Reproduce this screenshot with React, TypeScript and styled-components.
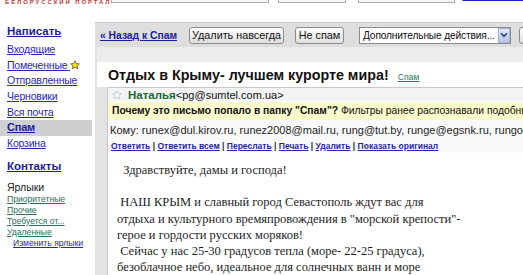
import styled, { createGlobalStyle } from 'styled-components'

const GlobalStyle = createGlobalStyle`
  body {
    margin: 0;
    background: #ffffff;
    font-family: "Liberation Sans", Arial, sans-serif;
  }
`

const Page = styled.div`
  width: 523px;
  height: 275px;
  overflow: hidden;
  background: #ffffff;
`

const TopStrip = styled.div`
  height: 6px;
  display: flex;
  align-items: flex-start;
  overflow: hidden;
  white-space: nowrap;
`

const Logo = styled.div`
  width: 112px;
  padding-left: 5px;
  margin-top: -1px;
  font-size: 6px;
  line-height: 6px;
  font-weight: bold;
  letter-spacing: 1.9px;
  color: #c43a3a;
`

const TopBox = styled.div<{ $w: number; $gap: number }>`
  width: ${(p) => p.$w}px;
  margin-left: ${(p) => p.$gap}px;
  height: 20px;
  margin-top: -19px;
  border: 1px solid #a9a9a9;
  background: #f6f6f6;
  flex-shrink: 0;
`

const TopLink = styled.a`
  margin-left: 7px;
  margin-top: -10px;
  font-size: 11px;
  line-height: 11px;
  color: #2323c0;
  text-decoration: underline;
`

const Layout = styled.div`
  display: flex;
  align-items: flex-start;
`

const Sidebar = styled.nav`
  width: 92px;
  flex-shrink: 0;
  padding-top: 17px;
`

const Compose = styled.a`
  display: block;
  padding-left: 7px;
  height: 16px;
  line-height: 16px;
  margin-bottom: 3px;
  font-size: 11.5px;
  font-weight: bold;
  color: #1c1c9c;
  text-decoration: underline;
`

const NavItem = styled.a<{ $active?: boolean }>`
  display: block;
  padding-left: 7px;
  height: 15.7px;
  line-height: 15.7px;
  font-size: ${(p) => (p.$active ? 11 : 10.5)}px;
  letter-spacing: -0.2px;
  font-weight: ${(p) => (p.$active ? 'bold' : 'normal')};
  color: ${(p) => (p.$active ? '#1c1c9c' : '#2828b8')};
  background: ${(p) => (p.$active ? '#cfcfcf' : 'transparent')};
  text-decoration: underline;
  white-space: nowrap;
  svg {
    vertical-align: -1px;
  }
`

const Contacts = styled(Compose)`
  margin-top: 6px;
  margin-bottom: 0;
`

const LabelsTitle = styled.div`
  margin-top: 6px;
  padding-left: 7px;
  height: 14px;
  line-height: 14px;
  font-size: 10.5px;
  color: #222222;
`

const LabelLink = styled.a<{ $edit?: boolean }>`
  display: block;
  padding-left: ${(p) => (p.$edit ? 13 : 7)}px;
  height: 11px;
  line-height: 11px;
  font-size: 8.6px;
  color: ${(p) => (p.$edit ? '#2828b8' : '#2b6e5a')};
  text-decoration: underline;
  white-space: nowrap;
`

const Main = styled.main`
  flex: 1;
  min-width: 0;
  margin-left: 3px;
  margin-top: 16px;
  background: #e3e3e3;
  height: 300px;
  overflow: hidden;
`

const Toolbar = styled.div`
  height: 25px;
  display: flex;
  align-items: center;
  padding-left: 5px;
  border-top: 1px solid #cbcbcb;
  box-sizing: border-box;
  background: #dedede;
  white-space: nowrap;
`

const BackLink = styled.a`
  font-size: 10.3px;
  font-weight: bold;
  color: #1c1c9c;
  text-decoration: underline;
  margin-right: 12px;
`

const Button = styled.button<{ $w: number; $gap: number }>`
  width: ${(p) => p.$w}px;
  flex-shrink: 0;
  height: 17px;
  margin-right: ${(p) => p.$gap}px;
  padding: 0;
  border: 1px solid #8c8c8c;
  border-radius: 3px;
  background: linear-gradient(#ffffff, #dedede);
  font-family: "Liberation Sans", Arial, sans-serif;
  font-size: 10.8px;
  color: #111111;
  overflow: hidden;
`

const Select = styled.div`
  width: 152px;
  flex-shrink: 0;
  height: 17px;
  box-sizing: border-box;
  border: 1px solid #8c8c8c;
  background: #ffffff;
  display: flex;
  align-items: center;
  justify-content: space-between;
  font-size: 10.2px;
  letter-spacing: -0.15px;
  color: #111111;
  padding-left: 3px;
  margin-right: 8px;
  overflow: hidden;
`

const SelectArrow = styled.span`
  width: 12px;
  height: 15px;
  flex-shrink: 0;
  box-sizing: border-box;
  border: 1px solid #9fb4d8;
  background: linear-gradient(#dce7f7, #b9cbea);
  display: flex;
  align-items: center;
  justify-content: center;
`

const Strip = styled.div`
  height: 15px;
  margin-left: 2px;
  background: #ececec;
`

const TitleRow = styled.div`
  height: 25px;
  margin-left: 2px;
  padding-left: 11px;
  background: #ffffff;
  display: flex;
  align-items: center;
  white-space: nowrap;
`

const Title = styled.h1`
  margin: 0;
  font-size: 14.3px;
  font-weight: bold;
  color: #111111;
`

const SpamTag = styled.a`
  margin-left: 9px;
  margin-top: 5px;
  font-size: 8.6px;
  color: #2b7a5b;
  text-decoration: underline;
`

const MessageArea = styled.div`
  padding-left: 12px;
`

const Card = styled.div`
  background: #ffffff;
  border-top: 1px solid #c8c8c8;
  border-left: 1px solid #c8c8c8;
  white-space: nowrap;
  overflow: hidden;
`

const SenderRow = styled.div`
  height: 13px;
  display: flex;
  align-items: center;
  padding-left: 4px;
  background: #f4f4f4;
  font-size: 11px;
  color: #111111;
`

const Sender = styled.span`
  margin-left: 6px;
  font-weight: bold;
  font-size: 11.5px;
  color: #17692f;
`

const Notice = styled.div`
  margin-top: 1px;
  height: 18px;
  line-height: 18px;
  padding-left: 4px;
  background: #fbfacb;
  font-size: 10.3px;
  color: #111111;
  b {
    font-weight: bold;
  }
`

const ToRow = styled.div`
  height: 20px;
  line-height: 20px;
  padding-left: 2px;
  background: #fafafa;
  font-size: 11px;
  color: #222222;
`

const ActionRow = styled.div`
  height: 13px;
  line-height: 13px;
  padding-left: 3px;
  background: #fafafa;
  font-size: 8.5px;
  font-weight: bold;
  color: #333333;
`

const Action = styled.a`
  color: #2626a8;
  text-decoration: underline;
`

const Body = styled.div`
  padding: 9px 0 0 9px;
  font-family: "Liberation Serif", "Times New Roman", serif;
  font-size: 12.5px;
  line-height: 16.2px;
  color: #1e1e1e;
`

const Line = styled.div`
  min-height: 16.2px;
`

const Star = ({ fill, stroke }: { fill: string; stroke: string }) => (
  <svg width="10" height="10" viewBox="0 0 20 20">
    <polygon
      points="10,1.5 12.6,7.2 18.6,7.6 14,11.6 15.5,17.8 10,14.5 4.5,17.8 6,11.6 1.4,7.6 7.4,7.2"
      fill={fill}
      stroke={stroke}
      strokeWidth="1.8"
      strokeLinejoin="round"
    />
  </svg>
)

const navItems = [
  'Входящие',
  'Помеченные',
  'Отправленные',
  'Черновики',
  'Вся почта',
  'Спам',
  'Корзина',
]

const labels = ['Приоритетные', 'Прочие', 'Требуется от...', 'Удаленные']

const actions = ['Ответить', 'Ответить всем', 'Переслать', 'Печать', 'Удалить', 'Показать оригинал']

const bodyLines = [
  '\u00a0\u00a0Здравствуйте, дамы и господа!',
  '',
  '\u00a0НАШ КРЫМ и славный город Севастополь ждут вас для',
  'отдыха и культурного времяпровождения в "морской крепости"-',
  'герое и гордости русских моряков!',
  '\u00a0Сейчас у нас 25-30 градусов тепла (море- 22-25 градуса),',
  'безоблачное небо, идеальное для солнечных ванн и море',
]

export default function App() {
  return (
    <Page>
      <GlobalStyle />
      <TopStrip>
        <Logo>БЕЛОРУССКИЙ ПОРТАЛ</Logo>
        <TopBox $w={156} $gap={0} />
        <TopBox $w={66} $gap={9} />
        <TopBox $w={95} $gap={12} />
        <TopLink>Показать параметры</TopLink>
      </TopStrip>
      <Layout>
        <Sidebar>
          <Compose>Написать</Compose>
          {navItems.map((item) => (
            <NavItem key={item} $active={item === 'Спам'}>
              {item}
              {item === 'Помеченные' && (
                <>
                  {' '}
                  <Star fill="#f7e21c" stroke="#6b6b3a" />
                </>
              )}
            </NavItem>
          ))}
          <Contacts>Контакты</Contacts>
          <LabelsTitle>Ярлыки</LabelsTitle>
          {labels.map((l) => (
            <LabelLink key={l}>{l}</LabelLink>
          ))}
          <LabelLink $edit>Изменить ярлыки</LabelLink>
        </Sidebar>
        <Main>
          <Toolbar>
            <BackLink>« Назад к Спам</BackLink>
            <Button $w={95} $gap={11}>Удалить навсегда</Button>
            <Button $w={49} $gap={15}>Не спам</Button>
            <Select>
              Дополнительные действия...
              <SelectArrow>
                <svg width="8" height="6" viewBox="0 0 8 6">
                  <path d="M1 1.2 L4 4.4 L7 1.2" fill="none" stroke="#2a3f7a" strokeWidth="1.6" />
                </svg>
              </SelectArrow>
            </Select>
            <Button $w={40} $gap={0}>Ещё</Button>
          </Toolbar>
          <Strip />
          <TitleRow>
            <Title>Отдых в Крыму- лучшем курорте мира!</Title>
            <SpamTag>Спам</SpamTag>
          </TitleRow>
          <MessageArea>
            <Card>
              <SenderRow>
                <Star fill="#ffffff" stroke="#b9c4d6" />
                <Sender>Наталья</Sender>
                &lt;pg@sumtel.com.ua&gt;
              </SenderRow>
              <Notice>
                <b>Почему это письмо попало в папку "Спам"?</b> Фильтры ранее распознавали подобные письма как спам.
              </Notice>
              <ToRow>
                Кому: runex@dul.kirov.ru, runez2008@mail.ru, rung@tut.by, runge@egsnk.ru, rungo@ogo.in.ua
              </ToRow>
              <ActionRow>
                {actions.map((a, i) => (
                  <span key={a}>
                    {i > 0 && ' | '}
                    <Action>{a}</Action>
                  </span>
                ))}
              </ActionRow>
              <Body>
                {bodyLines.map((line, i) => (
                  <Line key={i}>{line}</Line>
                ))}
              </Body>
            </Card>
          </MessageArea>
        </Main>
      </Layout>
    </Page>
  )
}
